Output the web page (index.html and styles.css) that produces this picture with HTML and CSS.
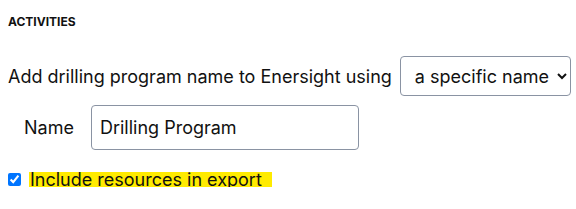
FILE: index.html
```html
<!DOCTYPE html>
<html lang="en">
<head>
    <meta charset="UTF-8">
    <title>Activities</title>
    <link rel="stylesheet" href="styles.css">
</head>
<body>
    <div class="section">
        <h4 class="section-title">ACTIVITIES</h4>

        <div class="row">
            <span>Add drilling program name to Enersight using</span>
            <select class="select">
                <option>a specific name</option>
                <option>the activity name</option>
            </select>
        </div>

        <div class="row name-row">
            <label for="programName">Name</label>
            <input type="text" id="programName" class="text-input" value="Drilling Program">
        </div>

        <div class="check-row">
            <input type="checkbox" id="includeResources" checked>
            <label for="includeResources" class="highlight">Include resources in export</label>
        </div>
    </div>
</body>
</html>
```

FILE: styles.css
```css
body {
    font-family: Inter, "Noto Sans", sans-serif;
    margin: 0;
    padding: 0;
    background-color: white;
    color: #111;
}
.section {
    padding: 14px 0 0 8px;
}
.section-title {
    font-size: 12px;
    font-weight: 700;
    margin: 0 0 26px 0;
    line-height: 16px;
}
.row {
    display: flex;
    align-items: center;
    gap: 8px;
    font-size: 18px;
    white-space: nowrap;
}
.select {
    flex-shrink: 0;
    font-family: inherit;
    font-size: 18px;
    color: #111;
    width: 171px;
    height: 40px;
    padding: 0 4px 0 10px;
    border: 1px solid #8a93a3;
    border-radius: 4px;
    background-color: white;
}
.name-row {
    margin-top: 9px;
    padding-left: 16px;
    gap: 17px;
}
.text-input {
    flex-shrink: 0;
    font-family: inherit;
    font-size: 18px;
    color: #111;
    width: 268px;
    height: 45px;
    box-sizing: border-box;
    padding: 0 8px;
    border: 1px solid #8a93a3;
    border-radius: 4px;
}
.check-row {
    display: flex;
    align-items: center;
    margin-top: 22px;
    font-size: 18px;
}
.check-row input {
    margin: 0 8px 0 0;
    width: 13px;
    height: 13px;
}
.highlight {
    background-color: #ffeb00;
    padding: 0 10px 0 1px;
    line-height: 15px;
}
```
